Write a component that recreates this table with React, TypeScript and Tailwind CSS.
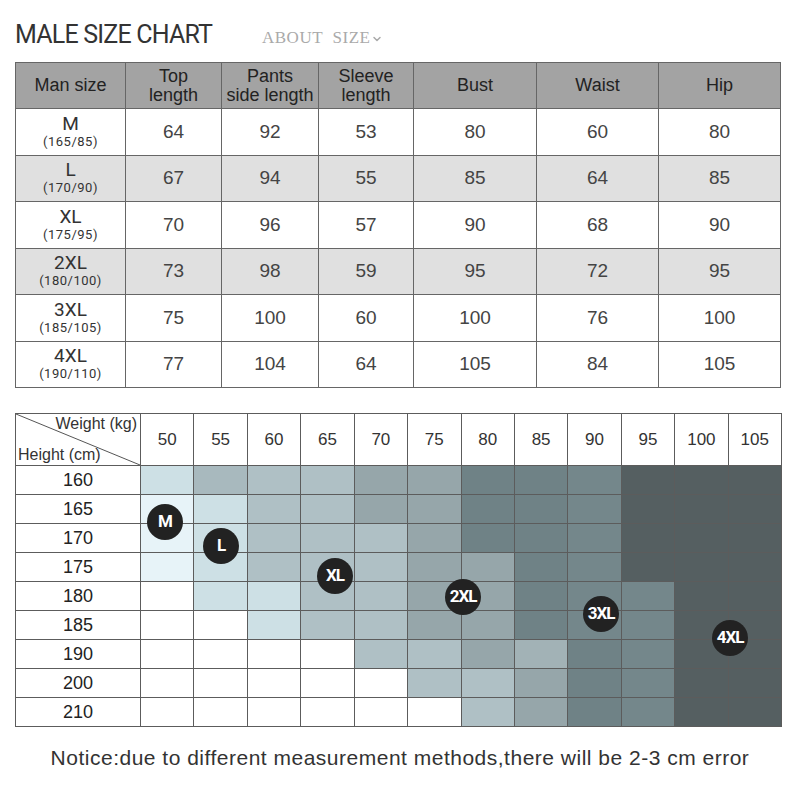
import { ChevronDown } from 'lucide-react';

const sizes = [
  { name: 'M', hw: '(165/85)', values: [64, 92, 53, 80, 60, 80], bg: 'bg-white' },
  { name: 'L', hw: '(170/90)', values: [67, 94, 55, 85, 64, 85], bg: 'bg-[#e0e0e0]' },
  { name: 'XL', hw: '(175/95)', values: [70, 96, 57, 90, 68, 90], bg: 'bg-white' },
  { name: '2XL', hw: '(180/100)', values: [73, 98, 59, 95, 72, 95], bg: 'bg-[#e0e0e0]' },
  { name: '3XL', hw: '(185/105)', values: [75, 100, 60, 100, 76, 100], bg: 'bg-white' },
  { name: '4XL', hw: '(190/110)', values: [77, 104, 64, 105, 84, 105], bg: 'bg-white' },
];

const headers = [['Man size'], ['Top', 'length'], ['Pants', 'side length'], ['Sleeve', 'length'], ['Bust'], ['Waist'], ['Hip']];

const weights = [50, 55, 60, 65, 70, 75, 80, 85, 90, 95, 100, 105];

// cell tones, light to dark
const tone: Record<string, string> = {
  W: 'bg-white',
  A: 'bg-[#e7f3f8]',
  B: 'bg-[#cde0e5]',
  C: 'bg-[#afc0c5]',
  K: 'bg-[#a8b9be]',
  E: 'bg-[#a2b2b6]',
  D: 'bg-[#96a6aa]',
  F: 'bg-[#6f8286]',
  G: 'bg-[#74878b]',
  H: 'bg-[#555f61]',
};

const chart: { height: number; cells: string }[] = [
  { height: 160, cells: 'BKCCDDFFGHHH' },
  { height: 165, cells: 'ABCCDDFFGHHH' },
  { height: 170, cells: 'ABCCCDFFGHHH' },
  { height: 175, cells: 'ABCCCDDFGHHH' },
  { height: 180, cells: 'WBBCCDDFGGHH' },
  { height: 185, cells: 'WWBCCDDFGGHH' },
  { height: 190, cells: 'WWWWCCDEFGHH' },
  { height: 200, cells: 'WWWWWCCDFGHH' },
  { height: 210, cells: 'WWWWWWCDFGHH' },
];

const badges = [
  { label: 'M', pos: 'left-[132px] top-[91px]' },
  { label: 'L', pos: 'left-[188px] top-[115px]' },
  { label: 'XL', pos: 'left-[302px] top-[145px]' },
  { label: '2XL', pos: 'left-[430px] top-[166px]' },
  { label: '3XL', pos: 'left-[568px] top-[183px]' },
  { label: '4XL', pos: 'left-[697px] top-[207px]' },
];

export default function App() {
  return (
    <div className="w-[800px] h-[800px] bg-white pl-[15px] font-['Liberation_Sans',Arial,sans-serif] text-[#333]">
      <div className="h-[62px] pt-[22px] flex items-baseline">
        <h1 className="w-[247px] font-['Roboto',sans-serif] text-[25px] leading-none tracking-[-0.8px] text-[#333]">
          MALE SIZE CHART
        </h1>
        <span className="flex items-center font-['Liberation_Serif',serif] text-[17px] leading-none tracking-[0.5px] text-[#aaa]">
          ABOUT&nbsp; SIZE
          <ChevronDown className="w-3 h-3 ml-[1px] mt-[3px]" strokeWidth={3} />
        </span>
      </div>

      <div className="w-fit border-t border-l border-[#666] grid grid-cols-[110px_96px_97px_95px_123px_122px_122px]">
        {headers.map((h) => (
          <div
            key={h.join(' ')}
            className="h-[46px] bg-[#a3a3a3] border-r border-b border-[#666] flex flex-col items-center justify-center text-[18px] leading-[19px] text-[#222] whitespace-nowrap"
          >
            {h.map((line) => (
              <span key={line}>{line}</span>
            ))}
          </div>
        ))}
        {sizes.map((row) => (
          <div key={row.name} className="contents">
            <div className={`h-[46.5px] border-r border-b border-[#666] flex flex-col items-center justify-center font-['Roboto',sans-serif] text-[#333] ${row.bg}`}>
              <span className="text-[19px] leading-[20px]">{row.name}</span>
              <span className="text-[13px] leading-[16px] tracking-[0.5px]">{row.hw}</span>
            </div>
            {row.values.map((v, i) => (
              <div
                key={i}
                className={`h-[46.5px] border-r border-b border-[#666] flex items-center justify-center text-[19px] text-[#444] ${row.bg}`}
              >
                {v}
              </div>
            ))}
          </div>
        ))}
      </div>

      <div className="relative mt-[25px] w-[767px]">
        <div className="border-t border-l border-[#5c5c5c] grid grid-cols-[125px_repeat(12,minmax(0,1fr))]">
          <div className="relative h-[52px] border-r border-b border-[#5c5c5c] bg-white text-[16px] text-[#333]">
            <svg className="absolute inset-0 w-full h-full" viewBox="0 0 124 51" preserveAspectRatio="none">
              <line x1="0" y1="0" x2="124" y2="51" stroke="#555" strokeWidth="1" />
            </svg>
            <span className="absolute top-[0px] right-[3px] leading-[20px]">Weight (kg)</span>
            <span className="absolute bottom-[0px] left-[2px] leading-[20px]">Height (cm)</span>
          </div>
          {weights.map((w) => (
            <div key={w} className="h-[52px] border-r border-b border-[#5c5c5c] bg-white flex items-center justify-center text-[17px] text-[#333]">
              {w}
            </div>
          ))}
          {chart.map((row) => (
            <div key={row.height} className="contents">
              <div className="h-[29px] border-r border-b border-[#5c5c5c] bg-white flex items-center justify-center text-[18px] text-[#222]">
                {row.height}
              </div>
              {row.cells.split('').map((c, i) => (
                <div key={i} className={`h-[29px] border-r border-b border-[#5c5c5c] ${tone[c]}`} />
              ))}
            </div>
          ))}
        </div>

        {badges.map((b) => (
          <div
            key={b.label}
            className={`absolute ${b.pos} w-[36px] h-[36px] rounded-full bg-[#222] flex items-center justify-center font-['Roboto',sans-serif] font-bold text-[17px] tracking-[-1px] text-white`}
          >
            {b.label}
          </div>
        ))}
      </div>

      <p className="mt-[21px] w-[770px] text-center text-[21px] leading-[20px] tracking-[0.5px] text-[#333]">
        Notice:due to different measurement methods,there will be 2-3 cm error
      </p>
    </div>
  );
}
